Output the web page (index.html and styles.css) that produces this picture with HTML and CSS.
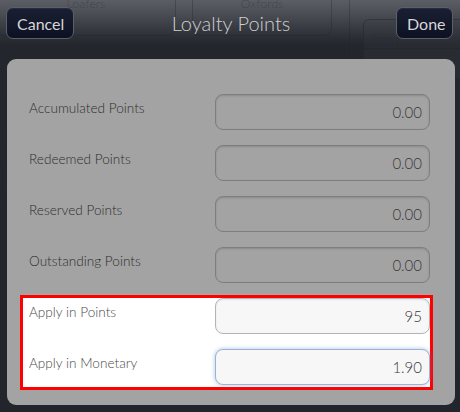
FILE: index.html
```html
<!DOCTYPE html>
<html>
<head>
<meta charset="utf-8">
<link rel="stylesheet" href="styles.css">
</head>
<body>
<div class="screen">
  <div class="backdrop">
    <div class="ghost-tab ghost-tab-a"><span class="ghost-text">Loafers</span></div>
    <div class="ghost-tab ghost-tab-b"><span class="ghost-text">Oxfords</span></div>
    <div class="ghost-line"></div>
    <div class="ghost-panel"><span>Item</span></div>
  </div>
  <header class="header">
    <button class="btn">Cancel</button>
    <h1 class="title">Loyalty Points</h1>
    <button class="btn">Done</button>
  </header>
  <main class="panel">
    <div class="group">
      <div class="row">
        <label class="label">Accumulated Points</label>
        <div class="field">0.00</div>
      </div>
      <div class="row">
        <label class="label">Redeemed Points</label>
        <div class="field">0.00</div>
      </div>
      <div class="row">
        <label class="label">Reserved Points</label>
        <div class="field">0.00</div>
      </div>
      <div class="row">
        <label class="label">Outstanding Points</label>
        <div class="field">0.00</div>
      </div>
    </div>
    <div class="group highlight">
      <div class="row">
        <label class="label">Apply in Points</label>
        <div class="field field-edit">95</div>
      </div>
      <div class="row">
        <label class="label">Apply in Monetary</label>
        <div class="field field-edit field-focus">1.90</div>
      </div>
    </div>
  </main>
</div>
</body>
</html>
```

FILE: styles.css
```css
* { box-sizing: border-box; }
html, body {
  margin: 0;
  padding: 0;
  width: 460px;
  height: 412px;
  overflow: hidden;
  background: #22252c;
  font-family: Lato, "Open Sans", sans-serif;
}
.screen {
  position: relative;
  width: 460px;
  height: 412px;
  background: linear-gradient(to bottom, #5b5e65 0px, #4a4d54 14px, #3a3d44 26px, #2a2d34 38px, #23262d 46px, #22252c 100%);
}
.backdrop {
  position: absolute;
  inset: 0;
  pointer-events: none;
}
.ghost-tab {
  position: absolute;
  top: -22px;
  height: 58px;
  border: 1px solid rgba(30, 32, 38, 0.3);
  border-radius: 8px;
  text-align: center;
  padding-top: 20px;
}
.ghost-text {
  display: block;
  height: 10px;
  color: rgba(40, 42, 48, 0.45);
  font-size: 12.5px;
  line-height: 10px;
  font-weight: 300;
}
.ghost-tab-a { left: -4px; width: 180px; }
.ghost-tab-b { left: 192px; width: 140px; }
.ghost-line {
  position: absolute;
  left: 349px;
  top: 0;
  width: 1px;
  height: 59px;
  background: rgba(30, 32, 38, 0.3);
}
.ghost-panel {
  position: absolute;
  left: 363px;
  top: 19px;
  width: 110px;
  height: 60px;
  border: 1px solid rgba(30, 32, 38, 0.4);
  border-radius: 6px;
  background: rgba(60, 63, 70, 0.2);
  color: rgba(40, 42, 48, 0.6);
  font-size: 15px;
  padding: 10px 0 0 6px;
  font-weight: 300;
}
.ghost-panel::after {
  content: "";
  position: absolute;
  left: 0;
  right: 0;
  top: 28px;
  height: 1px;
  background: rgba(30, 32, 38, 0.35);
}
.header {
  position: relative;
  display: grid;
  grid-template-columns: auto 1fr auto;
  align-items: center;
  height: 59px;
  padding: 7px 7px 20px 6px;
}
.btn {
  height: 32px;
  padding: 0 10px;
  border: 1px solid #5c5f66;
  border-radius: 7px;
  background: linear-gradient(to bottom, #1a1f33 0%, #0d1124 100%);
  color: #d6d6d6;
  font-family: Lato, sans-serif;
  font-size: 16px;
  font-weight: 400;
  box-shadow: inset 0 1px 0 rgba(255,255,255,0.06);
}
.header .btn:first-child { width: 68px; }
.header .btn:last-child { width: 57px; }
.title {
  margin: 0;
  text-align: center;
  color: #cfcfcf;
  font-size: 20px;
  line-height: 20px;
  font-weight: 300;
  padding-right: 8px;
}
.panel {
  position: relative;
  margin: 0 5px 0 7px;
  height: 346px;
  background: #a3a3a3;
  border-radius: 9px;
  padding-top: 35px;
}
.group {
  display: flex;
  flex-direction: column;
  gap: 15px;
}
.row {
  display: flex;
  align-items: flex-start;
  padding: 0 25px 0 22px;
}
.label {
  flex: 1;
  padding-top: 5px;
  font-size: 13.6px;
  line-height: 18px;
  color: #2e2e2e;
  font-weight: 300;
}
.field {
  width: 215px;
  height: 36px;
  border: 1px solid #7e7e7e;
  border-radius: 8px;
  background: #a3a3a3;
  box-shadow: inset 0 1px 2px rgba(0,0,0,0.15);
  text-align: right;
  padding-right: 7px;
  line-height: 34px;
  font-size: 15px;
  color: #383838;
  font-weight: 300;
}
.highlight {
  margin: 12px 22px 0 13px;
  border: 3px solid #ff0000;
  background: #ffffff;
  padding-bottom: 2px;
}
.highlight .row {
  padding: 0 0 0 6px;
}
.highlight .label {
  color: #4a4a4a;
}
.field-edit {
  background: #f7f7f7;
  border-color: #b4b4b4;
  box-shadow: inset 0 1px 2px rgba(0,0,0,0.08);
  color: #3a3a3a;
}
.field-focus {
  border-color: #9fb3cf;
  box-shadow: 0 0 4px rgba(90, 140, 210, 0.55);
}
```
